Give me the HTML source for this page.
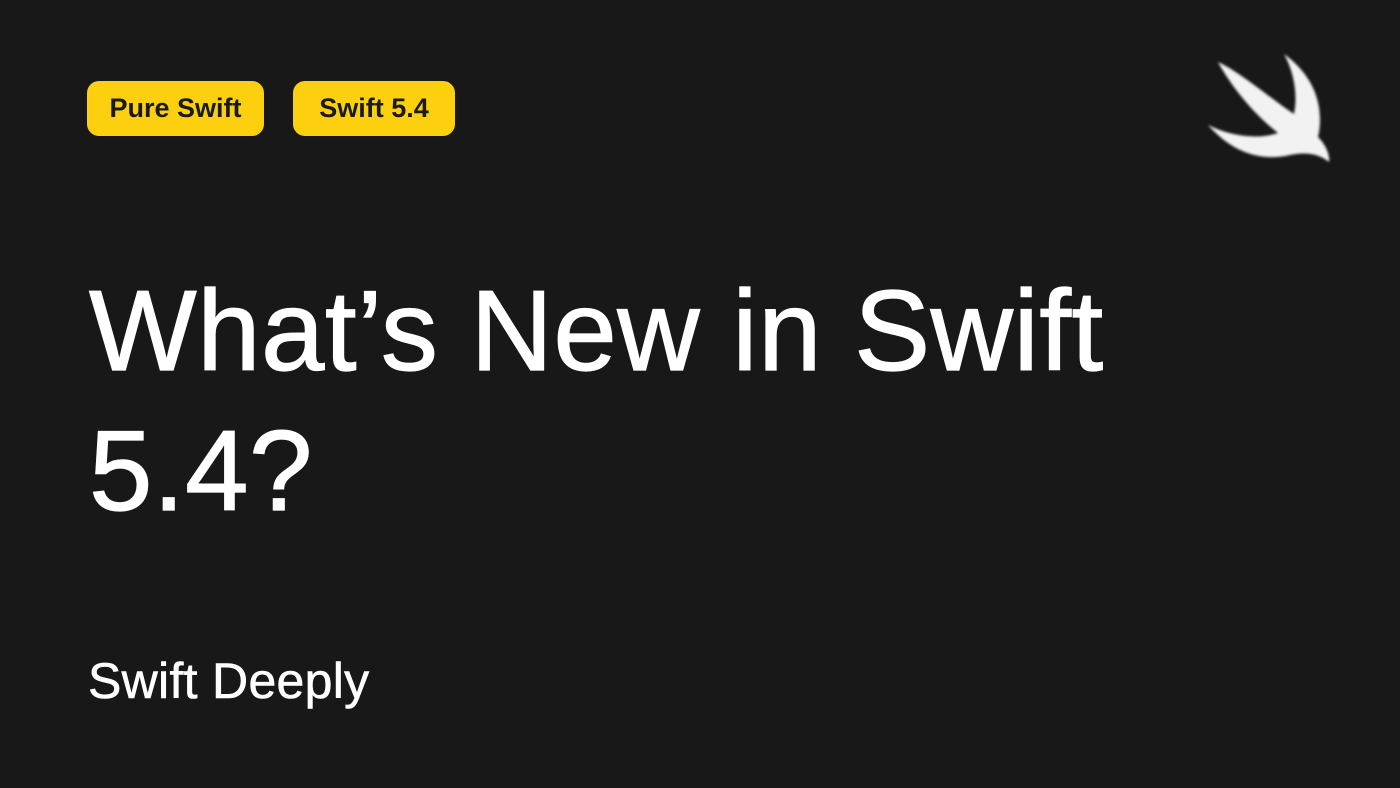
<!DOCTYPE html>
<html><head><style>
body{margin:0;width:1400px;height:788px;background:#181818;overflow:hidden;font-family:"Liberation Sans",sans-serif;position:relative}
.b{position:absolute;top:81px;height:55px;background:#fcd00e;border-radius:12px;color:#1a1a1a;font-weight:bold;font-size:27px;line-height:55px;text-align:center}
.t{position:absolute;left:89px;color:#fff;font-size:114px;line-height:140px;top:262px;-webkit-text-stroke:1.2px #fff;letter-spacing:0.5px}
.s{position:absolute;left:88px;top:651px;color:#fff;font-size:50px;line-height:60px;-webkit-text-stroke:0.6px #fff;letter-spacing:0.3px}
</style></head><body>
<div class="b" style="left:87px;width:177px">Pure Swift</div>
<div class="b" style="left:293px;width:162px">Swift 5.4</div>
<div class="t">What’s New in Swift<br>5.4?</div>
<div class="s">Swift Deeply</div>
<svg style="position:absolute;left:0;top:0" width="1400" height="788">
<defs><filter id="f"><feGaussianBlur stdDeviation="1.2"/></filter></defs>
<path filter="url(#f)" fill="#f2f2f2" d="M1218,62 C1240,72 1270,98 1294,114 C1298,95 1294,72 1284,54 C1306,70 1320,92 1320,120 C1320,127 1319,133 1318,137 C1326,145 1330,155 1329,162 C1318,153 1305,152 1290,155 C1260,162 1232,152 1208,125 C1230,136 1258,140 1278,133 C1255,115 1232,88 1218,62 Z"/>
</svg>
</body></html>
